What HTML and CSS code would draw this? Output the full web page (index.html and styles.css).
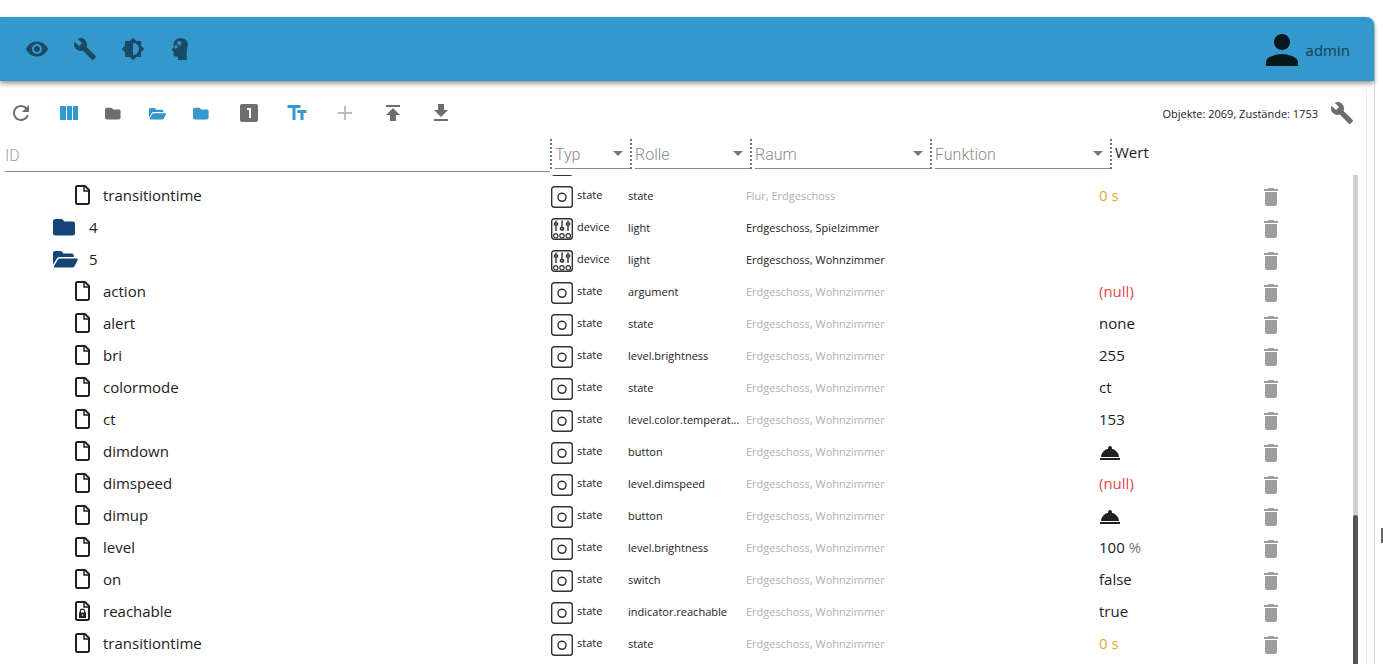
FILE: index.html
```
<!DOCTYPE html>
<html lang="de">
<head>
<meta charset="utf-8">
<title>Objekte</title>
<link rel="stylesheet" href="styles.css">
</head>
<body>
<svg class="defs" aria-hidden="true">
  <symbol id="eye" viewBox="0 0 24 24"><path d="M12 4.500C7 4.500 2.730 7.610 1 12c1.730 4.390 6 7.500 11 7.500s9.270-3.110 11-7.500c-1.730-4.390-6-7.500-11-7.500zM12 17c-2.760 0-5-2.240-5-5s2.240-5 5-5 5 2.240 5 5-2.240 5-5 5zm0-8c-1.660 0-3 1.340-3 3s1.340 3 3 3 3-1.340 3-3-1.340-3-3-3z"/></symbol>
  <symbol id="wrench" viewBox="0 0 24 24"><path d="M22.700 19l-9.100-9.100c.9-2.300.4-5-1.500-6.900-2-2-5-2.400-7.400-1.300L9 6 6 9 1.600 4.700C.4 7.100.9 10.100 2.900 12.100c1.900 1.900 4.600 2.400 6.900 1.500l9.100 9.100c.4.4 1 .4 1.400 0l2.300-2.300c.5-.4.5-1.100.1-1.400z"/></symbol>
  <symbol id="brightness" viewBox="0 0 24 24"><path d="M20 15.310L23.310 12 20 8.690V4h-4.690L12 .69 8.690 4H4v4.690L.69 12 4 15.310V20h4.690L12 23.310 15.310 20H20v-4.690zM12 18V6c3.310 0 6 2.690 6 6s-2.690 6-6 6z"/></symbol>
  <symbol id="head" viewBox="0 0 24 24"><path fill-rule="evenodd" d="M11.500 1C15.800 1 18.800 3.800 18.800 7.500c0 2.600-.6 4.200-1 5.800V23H9v-3.500H6.500c-1.100 0-2-.9-2-2V14H3.300c-.5 0-.7-.5-.4-.9L4.500 10C4 4.500 7 1 11.500 1zM10.800 3.800l-.9.500-1-.3-.7.900.5 1-.6.900.6 1 1.100-.1.900.7 1-.5.1-1.100.9-.7-.4-1.100-1-.2zM6.500 8.200l-1.200.8-.2 1.300.9 1.200 1.400.1 1.100-.8.100-1.400-.8-1.100z"/></symbol>
  <symbol id="person" viewBox="4 4 16 16"><path d="M12 12c2.210 0 4-1.790 4-4s-1.790-4-4-4-4 1.790-4 4 1.790 4 4 4zm0 2c-2.670 0-8 1.340-8 4v2h16v-2c0-2.660-5.330-4-8-4z"/></symbol>
  <symbol id="refresh" viewBox="0 0 24 24"><path d="M17.650 6.350C16.200 4.900 14.210 4 12 4c-4.420 0-7.990 3.580-7.990 8s3.570 8 7.990 8c3.730 0 6.840-2.550 7.730-6h-2.080c-.82 2.330-3.040 4-5.650 4-3.310 0-6-2.690-6-6s2.690-6 6-6c1.660 0 3.140.69 4.220 1.780L13 11h7V4l-2.350 2.350z"/></symbol>
  <symbol id="columns" viewBox="0 0 24 24"><path d="M10 19h5V5h-5v14zM3 19h6V5H3v14zM16 5v14h5V5h-5z"/></symbol>
  <symbol id="folder" viewBox="0 0 24 18"><path d="M2.500 1h6.500l2.500 2.500h8.500a2 2 0 0 1 2 2V15a2.500 2.500 0 0 1-2.500 2.500h-17A2.500 2.500 0 0 1 0 15V3.500A2.500 2.500 0 0 1 2.500 1z"/></symbol>
  <symbol id="folder-open" viewBox="0 0 26 18"><path d="M2.200 1h6l2.400 2.500h8a2.200 2.200 0 0 1 2.200 2.200V7H6.500a3 3 0 0 0-2.600 1.500L0 14.800V3.200A2.200 2.200 0 0 1 2.200 1z"/><path d="M6.800 8.500h17c.8 0 1.200.8.900 1.500l-3.200 6.200c-.4.800-1.100 1.300-2 1.300H1.800c-.7 0-1.100-.7-.8-1.300l3.900-6.700c.4-.6 1.100-1 1.900-1z"/></symbol>
  <symbol id="one" viewBox="0 0 24 24"><path d="M19 3H5c-1.100 0-2 .9-2 2v14c0 1.100.9 2 2 2h14c1.100 0 2-.9 2-2V5c0-1.100-.9-2-2-2zm-5 14h-2V9h-2V7h4v10z"/></symbol>
  <symbol id="size" viewBox="0 0 24 24"><path d="M2.500 4v3h5v12h3V7h5V4h-13zm19 5h-9v3h3v7h3v-7h3V9z"/></symbol>
  <symbol id="plus" viewBox="0 0 24 24"><path d="M19 13h-6v6h-2v-6H5v-2h6V5h2v6h6v2z"/></symbol>
  <symbol id="upload" viewBox="0 0 24 24"><path d="M5 4v2h14V4H5zm0 10h4v6h6v-6h4l-7-7-7 7z"/></symbol>
  <symbol id="download" viewBox="0 0 24 24"><path d="M19 9h-4V3H9v6H5l7 7 7-7zM5 18v2h14v-2H5z"/></symbol>
  <symbol id="file" viewBox="0 0 15 20"><path fill="none" stroke="currentColor" stroke-width="2" stroke-linejoin="round" d="M2.500 1h7.500l4 4v12.500a1.500 1.500 0 0 1-1.500 1.500h-10A1.500 1.500 0 0 1 1 17.500v-15A1.500 1.500 0 0 1 2.500 1z"/><path fill="none" stroke="currentColor" stroke-width="1.500" d="M9 1.500v4.500h5"/></symbol>
  <symbol id="file-lock" viewBox="0 0 15 20"><use href="#file"/><path d="M4 11.500h7v5.500H4z"/><path fill="none" stroke="currentColor" stroke-width="1.200" d="M5.300 12v-1.700a2.200 2.200 0 0 1 4.400 0V12"/><circle cx="7.500" cy="14" r=".8" fill="#fff"/></symbol>
  <symbol id="state" viewBox="0 0 22 22"><g fill="none" stroke="currentColor"><rect x=".7" y=".7" width="20.600" height="20.600" rx="2.500" stroke-width="1.400"/><circle cx="11" cy="11.300" r="4" stroke-width="1.500"/></g></symbol>
  <symbol id="device" viewBox="0 0 22 22"><g fill="none" stroke="currentColor" stroke-width="1.200"><rect x=".7" y=".7" width="20.600" height="20.600" rx="2.500" stroke-width="1.400"/><path d="M5 2.500v10.500M11 2.500v10.500M17 2.500v10.500" stroke-width="1.400"/><circle cx="4.700" cy="17.800" r="2.200"/><circle cx="11" cy="17.800" r="2.200"/><circle cx="17.300" cy="17.800" r="2.200"/></g><path d="M2.800 4.500h4.400v3H2.800zM8.800 9.300h4.400v3H8.800zM14.800 4.500h4.400v3h-4.400z"/><path fill="#fff" d="M4.500 5.500h1v1h-1zM10.500 10.300h1v1h-1zM16.500 5.500h1v1h-1z"/></symbol>
  <symbol id="bell" viewBox="0 0 24 24"><path d="M2 17h20v2H2zm11.840-9.210c.1-.24.16-.51.16-.79 0-1.100-.9-2-2-2s-2 .9-2 2c0 .28.060.55.160.79C6.250 8.600 3.270 11.930 3 16h18c-.27-4.070-3.250-7.400-7.160-8.210z"/></symbol>
  <symbol id="trash" viewBox="0 0 24 24"><path d="M6 19c0 1.100.9 2 2 2h8c1.100 0 2-.9 2-2V7H6v12zM19 4h-3.500l-1-1h-5l-1 1H5v2h14V4z"/></symbol>
</svg>

<div class="page">
<main class="app">
  <header class="appbar">
    <button class="icon-btn" aria-label="Ansicht"><svg><use href="#eye"/></svg></button>
    <button class="icon-btn" aria-label="Einstellungen"><svg><use href="#wrench"/></svg></button>
    <button class="icon-btn" aria-label="Design"><svg><use href="#brightness"/></svg></button>
    <button class="icon-btn" aria-label="Expertenmodus"><svg><use href="#head"/></svg></button>
    <button class="user"><svg><use href="#person"/></svg><span>admin</span></button>
  </header>

  <section class="browser">
    <div class="toolbar">
      <button class="icon-btn" aria-label="Aktualisieren"><svg><use href="#refresh"/></svg></button>
      <button class="icon-btn active" aria-label="Spalten"><svg><use href="#columns"/></svg></button>
      <button class="icon-btn fold" aria-label="Alle schließen"><svg><use href="#folder"/></svg></button>
      <button class="icon-btn fold wide active" aria-label="Alle öffnen"><svg><use href="#folder-open"/></svg></button>
      <button class="icon-btn fold active" aria-label="Ebene schließen"><svg><use href="#folder"/></svg></button>
      <button class="icon-btn" aria-label="Ebene eins"><svg><use href="#one"/></svg></button>
      <button class="icon-btn active" aria-label="Namen anzeigen"><svg><use href="#size"/></svg></button>
      <button class="icon-btn disabled" aria-label="Hinzufügen" disabled><svg><use href="#plus"/></svg></button>
      <button class="icon-btn" aria-label="Hochladen"><svg><use href="#upload"/></svg></button>
      <button class="icon-btn" aria-label="Herunterladen"><svg><use href="#download"/></svg></button>
      <span class="stats">Objekte: 2069, Zustände: 1753</span>
      <button class="icon-btn" aria-label="Konfigurieren"><svg><use href="#wrench"/></svg></button>
    </div>

    <div class="filters">
      <input class="id-filter" type="text" placeholder="ID" aria-label="ID">
      <div class="filter type"><select aria-label="Typ"><option>Typ</option></select></div>
      <div class="filter role"><select aria-label="Rolle"><option>Rolle</option></select></div>
      <div class="filter room"><select aria-label="Raum"><option>Raum</option></select></div>
      <div class="filter func"><select aria-label="Funktion"><option>Funktion</option></select></div>
      <div class="value-head">Wert</div>
    </div>

    <div class="list">
      <div class="scroller">
      <table class="objects">
        <colgroup><col><col class="c-type"><col class="c-role"><col class="c-room"><col class="c-func"><col class="c-value"><col class="c-act"></colgroup>
        <tbody>
        <tr><td></td><td><span class="kind"><svg><use href="#state"/></svg></span></td><td></td><td></td><td></td><td></td><td></td></tr>
        <tr><td class="text"><span class="name leaf"><svg><use href="#file"/></svg>transitiontime</span></td><td><span class="kind"><svg><use href="#state"/></svg>state</span></td><td class="text">state</td><td class="text muted">Flur, Erdgeschoss</td><td></td><td class="text value warn">0 s</td><td><button class="del" aria-label="Löschen"><svg><use href="#trash"/></svg></button></td></tr>
        <tr><td class="text"><span class="name dir"><svg><use href="#folder"/></svg>4</span></td><td><span class="kind"><svg><use href="#device"/></svg>device</span></td><td class="text">light</td><td class="text">Erdgeschoss, Spielzimmer</td><td></td><td></td><td><button class="del" aria-label="Löschen"><svg><use href="#trash"/></svg></button></td></tr>
        <tr><td class="text"><span class="name dir open"><svg><use href="#folder-open"/></svg>5</span></td><td><span class="kind"><svg><use href="#device"/></svg>device</span></td><td class="text">light</td><td class="text">Erdgeschoss, Wohnzimmer</td><td></td><td></td><td><button class="del" aria-label="Löschen"><svg><use href="#trash"/></svg></button></td></tr>
        <tr><td class="text"><span class="name leaf"><svg><use href="#file"/></svg>action</span></td><td><span class="kind"><svg><use href="#state"/></svg>state</span></td><td class="text">argument</td><td class="text muted">Erdgeschoss, Wohnzimmer</td><td></td><td class="text value null">(null)</td><td><button class="del" aria-label="Löschen"><svg><use href="#trash"/></svg></button></td></tr>
        <tr><td class="text"><span class="name leaf"><svg><use href="#file"/></svg>alert</span></td><td><span class="kind"><svg><use href="#state"/></svg>state</span></td><td class="text">state</td><td class="text muted">Erdgeschoss, Wohnzimmer</td><td></td><td class="text value">none</td><td><button class="del" aria-label="Löschen"><svg><use href="#trash"/></svg></button></td></tr>
        <tr><td class="text"><span class="name leaf"><svg><use href="#file"/></svg>bri</span></td><td><span class="kind"><svg><use href="#state"/></svg>state</span></td><td class="text">level.brightness</td><td class="text muted">Erdgeschoss, Wohnzimmer</td><td></td><td class="text value">255</td><td><button class="del" aria-label="Löschen"><svg><use href="#trash"/></svg></button></td></tr>
        <tr><td class="text"><span class="name leaf"><svg><use href="#file"/></svg>colormode</span></td><td><span class="kind"><svg><use href="#state"/></svg>state</span></td><td class="text">state</td><td class="text muted">Erdgeschoss, Wohnzimmer</td><td></td><td class="text value">ct</td><td><button class="del" aria-label="Löschen"><svg><use href="#trash"/></svg></button></td></tr>
        <tr><td class="text"><span class="name leaf"><svg><use href="#file"/></svg>ct</span></td><td><span class="kind"><svg><use href="#state"/></svg>state</span></td><td class="text">level.color.temperat...</td><td class="text muted">Erdgeschoss, Wohnzimmer</td><td></td><td class="text value">153</td><td><button class="del" aria-label="Löschen"><svg><use href="#trash"/></svg></button></td></tr>
        <tr><td class="text"><span class="name leaf"><svg><use href="#file"/></svg>dimdown</span></td><td><span class="kind"><svg><use href="#state"/></svg>state</span></td><td class="text">button</td><td class="text muted">Erdgeschoss, Wohnzimmer</td><td></td><td><button class="bell" aria-label="Auslösen"><svg><use href="#bell"/></svg></button></td><td><button class="del" aria-label="Löschen"><svg><use href="#trash"/></svg></button></td></tr>
        <tr><td class="text"><span class="name leaf"><svg><use href="#file"/></svg>dimspeed</span></td><td><span class="kind"><svg><use href="#state"/></svg>state</span></td><td class="text">level.dimspeed</td><td class="text muted">Erdgeschoss, Wohnzimmer</td><td></td><td class="text value null">(null)</td><td><button class="del" aria-label="Löschen"><svg><use href="#trash"/></svg></button></td></tr>
        <tr><td class="text"><span class="name leaf"><svg><use href="#file"/></svg>dimup</span></td><td><span class="kind"><svg><use href="#state"/></svg>state</span></td><td class="text">button</td><td class="text muted">Erdgeschoss, Wohnzimmer</td><td></td><td><button class="bell" aria-label="Auslösen"><svg><use href="#bell"/></svg></button></td><td><button class="del" aria-label="Löschen"><svg><use href="#trash"/></svg></button></td></tr>
        <tr><td class="text"><span class="name leaf"><svg><use href="#file"/></svg>level</span></td><td><span class="kind"><svg><use href="#state"/></svg>state</span></td><td class="text">level.brightness</td><td class="text muted">Erdgeschoss, Wohnzimmer</td><td></td><td class="text value">100 <span class="unit">%</span></td><td><button class="del" aria-label="Löschen"><svg><use href="#trash"/></svg></button></td></tr>
        <tr><td class="text"><span class="name leaf"><svg><use href="#file"/></svg>on</span></td><td><span class="kind"><svg><use href="#state"/></svg>state</span></td><td class="text">switch</td><td class="text muted">Erdgeschoss, Wohnzimmer</td><td></td><td class="text value">false</td><td><button class="del" aria-label="Löschen"><svg><use href="#trash"/></svg></button></td></tr>
        <tr><td class="text"><span class="name leaf"><svg><use href="#file-lock"/></svg>reachable</span></td><td><span class="kind"><svg><use href="#state"/></svg>state</span></td><td class="text">indicator.reachable</td><td class="text muted">Erdgeschoss, Wohnzimmer</td><td></td><td class="text value">true</td><td><button class="del" aria-label="Löschen"><svg><use href="#trash"/></svg></button></td></tr>
        <tr><td class="text"><span class="name leaf"><svg><use href="#file"/></svg>transitiontime</span></td><td><span class="kind"><svg><use href="#state"/></svg>state</span></td><td class="text">state</td><td class="text muted">Erdgeschoss, Wohnzimmer</td><td></td><td class="text value warn">0 s</td><td><button class="del" aria-label="Löschen"><svg><use href="#trash"/></svg></button></td></tr>
        </tbody>
      </table>
      </div>
      <div class="track"><div class="thumb"></div></div>
    </div>
  </section>
</main>
<aside class="edge"><div class="caret"></div></aside>
</div>
</body>
</html>
```

FILE: styles.css
```
* { box-sizing: border-box; }

body {
  margin: 0;
  background: #fff;
  color: #212121;
  font-family: "Open Sans", "Noto Sans", sans-serif;
  font-size: 15px;
}

button {
  border: 0;
  padding: 0;
  background: none;
  color: inherit;
  font: inherit;
  cursor: pointer;
}

svg { display: block; fill: currentColor; flex: none; }
.defs { position: absolute; width: 0; height: 0; }

.page { display: flex; height: 100vh; padding-top: 17px; }

.app {
  flex: 1;
  min-width: 0;
  display: flex;
  flex-direction: column;
  border-right: 1px solid #d8d8d8;
  border-radius: 0 8px 0 0;
  background: #fff;
}

.appbar {
  display: flex;
  align-items: center;
  flex: none;
  height: 64px;
  padding: 0 24px 0 13px;
  border-radius: 0 8px 0 0;
  background: #3399cc;
  color: #1a4a66;
  box-shadow: 0 2px 4px rgba(0, 0, 0, .35), 0 4px 6px rgba(0, 0, 0, .12);
}

.icon-btn {
  display: flex;
  align-items: center;
  justify-content: center;
  width: 48px;
  height: 48px;
  flex: none;
}
.icon-btn svg { width: 24px; height: 24px; }

.user { display: flex; align-items: center; gap: 8px; margin-left: auto; padding-top: 2px; color: #173f56; }
.user svg { width: 32px; height: 32px; color: #07151d; }

.browser {
  flex: 1;
  min-height: 0;
  display: flex;
  flex-direction: column;
  margin: 8px 7px 0 0;
  border-right: 1px solid #ececec;
}

.toolbar { display: flex; align-items: center; flex: none; height: 48px; margin-left: -3px; color: #6e6e6e; }
.toolbar .active { color: #3399cc; }
.toolbar .disabled { color: #bdbdbd; }
.toolbar .fold { width: 44px; justify-content: flex-start; padding-left: 12px; }
.toolbar .fold svg { width: 17px; height: 13px; }
.toolbar .wide svg { width: 18px; }
.stats { margin-left: auto; color: #212121; font-size: 11px; }

.filters { display: flex; align-items: flex-start; flex: none; height: 38px; padding-top: 2px; }

.id-filter {
  flex: 1;
  min-width: 0;
  height: 33px;
  margin-left: 5px;
  padding: 0;
  border: 0;
  border-bottom: 1px solid #8c8c8c;
  background: none;
  font: 300 16px Roboto, sans-serif;
}
.id-filter::placeholder { color: #9e9e9e; }

.filter {
  position: relative;
  flex: none;
  height: 30px;
  padding-left: 3px;
  border-left: 2px dotted #757575;
}
.filter::after {
  content: "";
  position: absolute;
  right: 7px;
  top: 12px;
  border: 5px solid transparent;
  border-top-color: #757575;
  border-bottom: 0;
}
.filter select {
  appearance: none;
  width: 100%;
  height: 30px;
  padding: 2px 0 0;
  border: 0;
  border-bottom: 1px solid #8c8c8c;
  border-radius: 0;
  background: none;
  color: #8c8c8c;
  font: 300 16px Roboto, sans-serif;
}
.type { width: 80px; }
.role { width: 120px; }
.room, .func { width: 180px; }
.value-head { flex: none; width: 256px; height: 30px; padding-left: 3px; border-left: 2px dotted #757575; line-height: 26px; }

.list { flex: 1; min-height: 0; display: flex; padding-right: 8px; }
.scroller { flex: 1; min-width: 0; overflow: hidden; }

.objects {
  width: 100%;
  margin-top: -26px;
  table-layout: fixed;
  border-collapse: collapse;
  font-size: 11px;
}
.objects td { height: 32px; padding: 0; white-space: nowrap; }
.objects .text { padding-bottom: 4px; }
.c-type { width: 77px; }
.c-role { width: 118px; }
.c-room { width: 180px; }
.c-func { width: 173px; }
.c-value { width: 160px; }
.c-act { width: 94px; }

.name { display: flex; align-items: center; gap: 13px; font-size: 15px; }
.leaf { padding-left: 75px; }
.leaf svg { width: 15px; height: 20px; }
.dir { gap: 12px; padding-left: 53px; }
.dir svg { width: 24px; height: 18px; color: #164477; }
.open { gap: 10px; }
.open svg { width: 26px; }

.kind { display: flex; align-items: flex-start; gap: 4px; line-height: 18px; }
.kind svg { width: 22px; height: 22px; color: #333; }

.muted { color: #b0b0b0; }
.objects .value { font-size: 15px; }
.objects .warn { color: #e8a634; }
.objects .null { color: #e04848; }
.unit { color: #757575; }

.bell { display: block; margin-left: -1px; }
.bell svg { width: 24px; height: 24px; }
.del { display: block; color: #9e9e9e; }
.del svg { width: 24px; height: 24px; }

.track { flex: none; width: 5px; overflow: hidden; background: #d0d0d0; }
.thumb { height: 100%; margin-top: 340px; border-radius: 3px 3px 0 0; background: #555; }

.edge { flex: none; width: 8px; padding: 511px 0 0 6px; }
.caret { width: 2px; height: 15px; background: #666; }
```
